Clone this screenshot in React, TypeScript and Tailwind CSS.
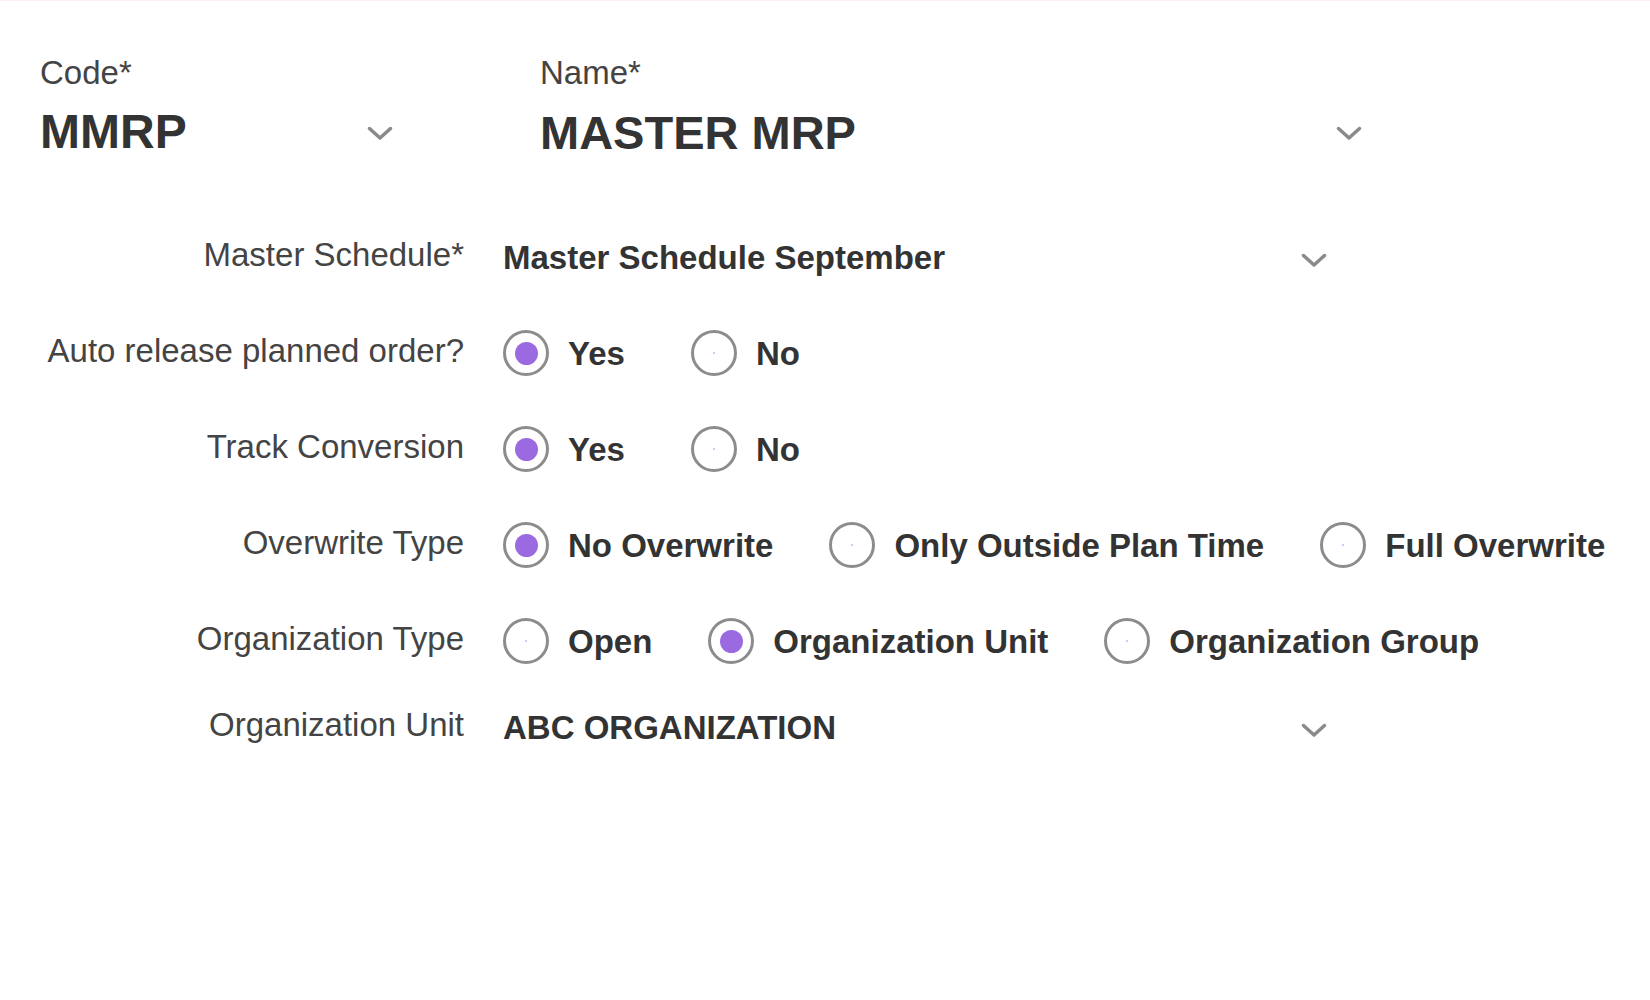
import { useState } from 'react';

const Chevron = ({ className = '' }: { className?: string }) => (
  <svg width="26" height="15" viewBox="0 0 26 15" fill="none" className={`shrink-0 ${className}`}>
    <polyline points="2.5,2.5 13,12 23.5,2.5" stroke="#8a8a8a" strokeWidth="3.5" strokeLinecap="round" strokeLinejoin="round" />
  </svg>
);

type Opt = { value: string; label: string };

const Radio = ({ checked, label, onClick }: { checked: boolean; label: string; onClick: () => void }) => (
  <button type="button" onClick={onClick} className="flex items-center gap-[19px] cursor-pointer">
    <span className="w-[46px] h-[46px] rounded-full border-[3px] border-[#8c8c8c] flex items-center justify-center bg-white">
      {checked ? (
        <span className="w-[23px] h-[23px] rounded-full bg-[#9b6ae0]" />
      ) : (
        <span className="w-[2px] h-[2px] rounded-full bg-[#c9b3f2]" />
      )}
    </span>
    <span className="text-[33px] font-bold text-[#333] leading-none">{label}</span>
  </button>
);

const RadioGroup = ({ options, value, onChange, gap }: { options: Opt[]; value: string; onChange: (v: string) => void; gap: string }) => (
  <div className={`flex items-center ${gap}`}>
    {options.map((o) => (
      <Radio key={o.value} checked={value === o.value} label={o.label} onClick={() => onChange(o.value)} />
    ))}
  </div>
);

const Row = ({ label, children, h = 'h-[96px]' }: { label: string; children: React.ReactNode; h?: string }) => (
  <div className={`flex items-center ${h}`}>
    <div className="w-[464px] shrink-0 text-right text-[33px] text-[#444] leading-none pb-[5px]">{label}</div>
    <div className="pl-[39px] flex-1">{children}</div>
  </div>
);

const SelectValue = ({ value }: { value: string }) => (
  <div className="flex items-center justify-between w-[824px]">
    <span className="text-[33px] font-bold text-[#333] leading-none">{value}</span>
    <Chevron className="mt-[7px]" />
  </div>
);

export default function App() {
  const [autoRelease, setAutoRelease] = useState('yes');
  const [track, setTrack] = useState('yes');
  const [overwrite, setOverwrite] = useState('none');
  const [orgType, setOrgType] = useState('unit');

  const yesNo = [
    { value: 'yes', label: 'Yes' },
    { value: 'no', label: 'No' },
  ];

  return (
    <div className="w-[1650px] h-[1000px] bg-white font-['Liberation_Sans',Arial,sans-serif]">
      <div className="h-px bg-[#fbeef5]" />
      {/* 코드 / 이름 */}
      <div className="flex pt-[53px] pl-[40px]">
        <div className="w-[353px] flex flex-col">
          <span className="text-[33px] text-[#444] leading-[38px]">Code*</span>
          <div className="mt-[12px] h-[56px] flex items-center justify-between">
            <span className="text-[48px] font-bold text-[#333] leading-none">MMRP</span>
            <Chevron className="mt-[2px]" />
          </div>
        </div>
        <div className="ml-[147px] w-[822px] flex flex-col">
          <span className="text-[33px] text-[#444] leading-[38px]">Name*</span>
          <div className="mt-[12px] h-[56px] flex items-center justify-between">
            <span className="text-[47px] font-bold text-[#333] leading-none">MASTER MRP</span>
            <Chevron className="mt-[2px]" />
          </div>
        </div>
      </div>

      <div className="mt-[49px] flex flex-col">
        <Row label="Master Schedule*">
          <SelectValue value="Master Schedule September" />
        </Row>
        <Row label="Auto release planned order?">
          <RadioGroup options={yesNo} value={autoRelease} onChange={setAutoRelease} gap="gap-[66px]" />
        </Row>
        <Row label="Track Conversion">
          <RadioGroup options={yesNo} value={track} onChange={setTrack} gap="gap-[66px]" />
        </Row>
        <Row label="Overwrite Type">
          <RadioGroup
            options={[
              { value: 'none', label: 'No Overwrite' },
              { value: 'outside', label: 'Only Outside Plan Time' },
              { value: 'full', label: 'Full Overwrite' },
            ]}
            value={overwrite}
            onChange={setOverwrite}
            gap="gap-[56px]"
          />
        </Row>
        <Row label="Organization Type">
          <RadioGroup
            options={[
              { value: 'open', label: 'Open' },
              { value: 'unit', label: 'Organization Unit' },
              { value: 'group', label: 'Organization Group' },
            ]}
            value={orgType}
            onChange={setOrgType}
            gap="gap-[56px]"
          />
        </Row>
        <Row label="Organization Unit" h="h-[76px]">
          <SelectValue value="ABC ORGANIZATION" />
        </Row>
      </div>
    </div>
  );
}
